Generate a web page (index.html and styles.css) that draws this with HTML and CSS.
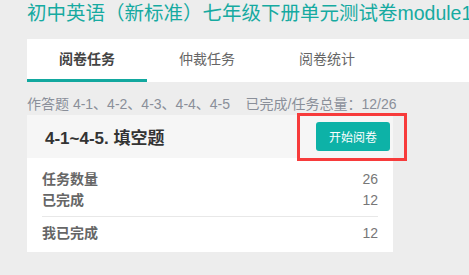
FILE: index.html
```html
<!DOCTYPE html>
<html lang="zh">
<head>
    <meta charset="UTF-8">
    <meta name="viewport" content="width=device-width, initial-scale=1.0">
    <title>阅卷任务</title>
    <link rel="stylesheet" href="styles.css">
</head>
<body>
    <div class="page">
        <h1 class="page-title">初中英语（新标准）七年级下册单元测试卷module1</h1>

        <!-- 标签栏 -->
        <nav class="tabs">
            <a href="javascript:void(0)" class="tab active">阅卷任务</a>
            <a href="javascript:void(0)" class="tab">仲裁任务</a>
            <a href="javascript:void(0)" class="tab">阅卷统计</a>
        </nav>

        <p class="task-info">作答题 4-1、4-2、4-3、4-4、4-5&nbsp;&nbsp;&nbsp;&nbsp;已完成/任务总量：12/26</p>

        <!-- 任务卡片 -->
        <div class="task-card">
            <div class="card-head">
                <h2 class="card-title">4-1~4-5. 填空题</h2>
                <button class="btn-start">开始阅卷</button>
                <span class="mark-box"></span>
            </div>
            <div class="card-body">
                <div class="stat-row"><span class="label">任务数量</span><span class="num">26</span></div>
                <div class="stat-row"><span class="label">已完成</span><span class="num">12</span></div>
                <div class="stat-row mine"><span class="label">我已完成</span><span class="num">12</span></div>
            </div>
        </div>
    </div>
</body>
</html>
```

FILE: styles.css
```css
body {
    font-family: "Liberation Sans", "Noto Sans CJK SC", sans-serif;
    margin: 0;
    padding: 0;
    background-color: #ededed;
    overflow: hidden;
}
.page {
    padding-left: 27px;
}
.page-title {
    margin: 0 0 13px 0;
    font-size: 19.5px;
    font-weight: normal;
    line-height: 26px;
    color: #16aaa1;
    white-space: nowrap;
}
.tabs {
    display: flex;
    height: 43px;
    background: white;
}
.tab {
    width: 120px;
    box-sizing: border-box;
    text-align: center;
    line-height: 40px;
    font-size: 14px;
    color: #666;
    text-decoration: none;
}
.tab.active {
    font-weight: bold;
    color: #444;
    border-bottom: 3px solid #12a89f;
}
.task-info {
    margin: 14px 0 2px 0;
    font-size: 14px;
    line-height: 17px;
    color: #8a8f99;
    white-space: nowrap;
}
.task-card {
    width: 366px;
    background: white;
}
.card-head {
    position: relative;
    display: flex;
    justify-content: space-between;
    align-items: center;
    height: 43px;
    padding: 0 3px 0 18px;
    background: #f6f6f6;
}
.card-title {
    margin: 0;
    font-size: 17px;
    font-weight: bold;
    color: #333;
}
.btn-start {
    width: 74px;
    height: 29px;
    border: none;
    border-radius: 3px;
    background: #0db2a7;
    color: white;
    font-family: inherit;
    font-size: 12px;
    padding: 0;
}
.mark-box {
    position: absolute;
    left: 270px;
    top: -2px;
    width: 110px;
    height: 48px;
    box-sizing: border-box;
    border: 3px solid #f73b3b;
}
.card-body {
    padding: 11px 15px 8px 15px;
}
.stat-row {
    display: flex;
    justify-content: space-between;
    line-height: 21px;
    font-size: 14px;
}
.stat-row .label {
    font-weight: bold;
    color: #666;
}
.stat-row .num {
    color: #777;
}
.stat-row.mine {
    margin-top: 5px;
    padding-top: 6px;
    border-top: 1px solid #e8e8e8;
}
```
